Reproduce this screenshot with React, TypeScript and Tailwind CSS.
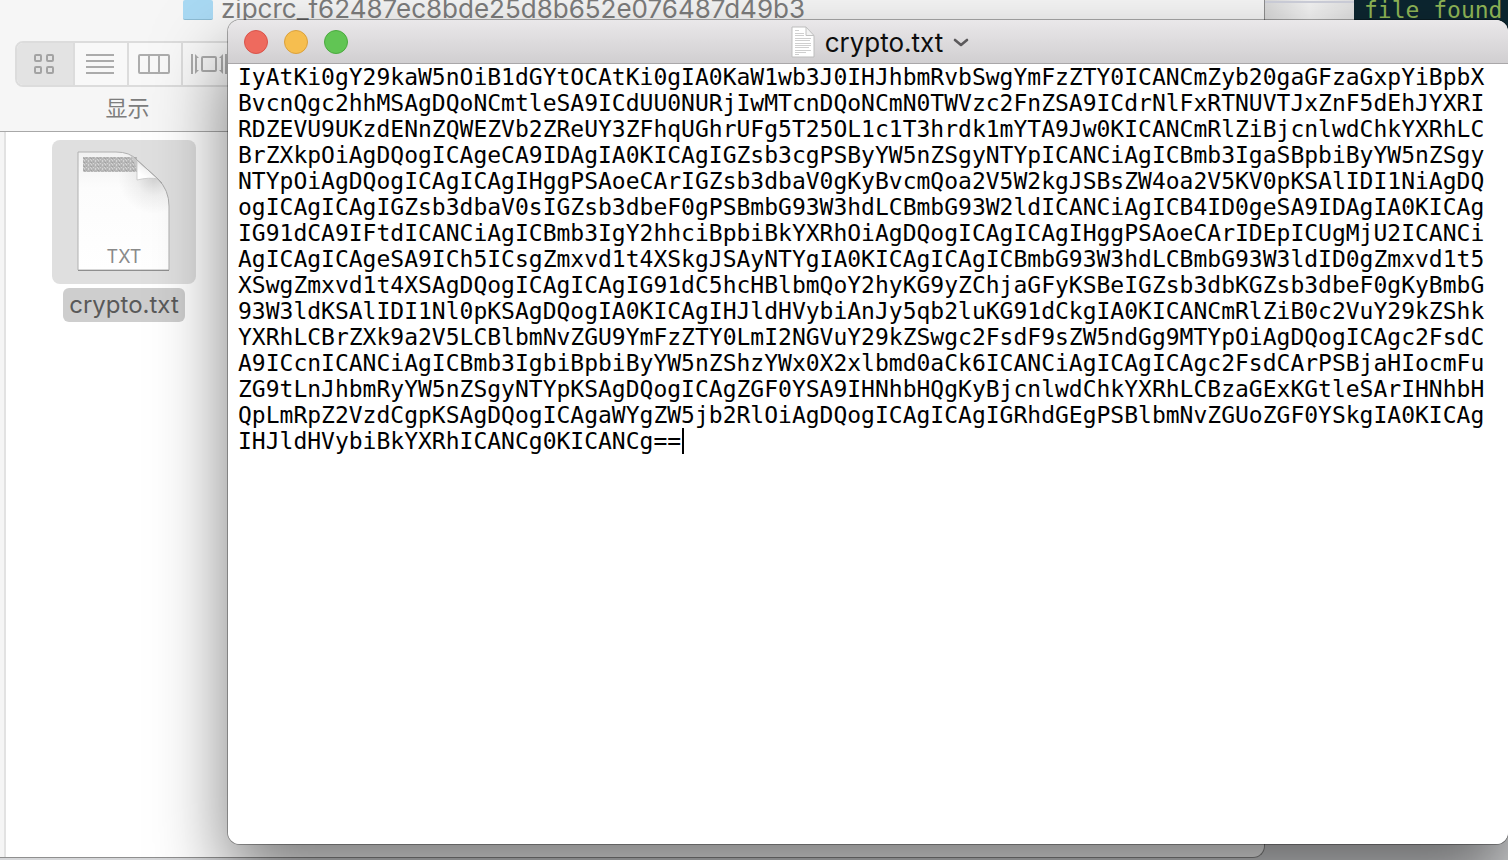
import React from 'react';

const LINES = [
  'IyAtKi0gY29kaW5nOiB1dGYtOCAtKi0gIA0KaW1wb3J0IHJhbmRvbSwgYmFzZTY0ICANCmZyb20gaGFzaGxpYiBpbX',
  'BvcnQgc2hhMSAgDQoNCmtleSA9ICdUU0NURjIwMTcnDQoNCmN0TWVzc2FnZSA9ICdrNlFxRTNUVTJxZnF5dEhJYXRI',
  'RDZEVU9UKzdENnZQWEZVb2ZReUY3ZFhqUGhrUFg5T25OL1c1T3hrdk1mYTA9Jw0KICANCmRlZiBjcnlwdChkYXRhLC',
  'BrZXkpOiAgDQogICAgeCA9IDAgIA0KICAgIGZsb3cgPSByYW5nZSgyNTYpICANCiAgICBmb3IgaSBpbiByYW5nZSgy',
  'NTYpOiAgDQogICAgICAgIHggPSAoeCArIGZsb3dbaV0gKyBvcmQoa2V5W2kgJSBsZW4oa2V5KV0pKSAlIDI1NiAgDQ',
  'ogICAgICAgIGZsb3dbaV0sIGZsb3dbeF0gPSBmbG93W3hdLCBmbG93W2ldICANCiAgICB4ID0geSA9IDAgIA0KICAg',
  'IG91dCA9IFtdICANCiAgICBmb3IgY2hhciBpbiBkYXRhOiAgDQogICAgICAgIHggPSAoeCArIDEpICUgMjU2ICANCi',
  'AgICAgICAgeSA9ICh5ICsgZmxvd1t4XSkgJSAyNTYgIA0KICAgICAgICBmbG93W3hdLCBmbG93W3ldID0gZmxvd1t5',
  'XSwgZmxvd1t4XSAgDQogICAgICAgIG91dC5hcHBlbmQoY2hyKG9yZChjaGFyKSBeIGZsb3dbKGZsb3dbeF0gKyBmbG',
  '93W3ldKSAlIDI1Nl0pKSAgDQogIA0KICAgIHJldHVybiAnJy5qb2luKG91dCkgIA0KICANCmRlZiB0c2VuY29kZShk',
  'YXRhLCBrZXk9a2V5LCBlbmNvZGU9YmFzZTY0LmI2NGVuY29kZSwgc2FsdF9sZW5ndGg9MTYpOiAgDQogICAgc2FsdC',
  'A9ICcnICANCiAgICBmb3IgbiBpbiByYW5nZShzYWx0X2xlbmd0aCk6ICANCiAgICAgICAgc2FsdCArPSBjaHIocmFu',
  'ZG9tLnJhbmRyYW5nZSgyNTYpKSAgDQogICAgZGF0YSA9IHNhbHQgKyBjcnlwdChkYXRhLCBzaGExKGtleSArIHNhbH',
  'QpLmRpZ2VzdCgpKSAgDQogICAgaWYgZW5jb2RlOiAgDQogICAgICAgIGRhdGEgPSBlbmNvZGUoZGF0YSkgIA0KICAg',
  'IHJldHVybiBkYXRhICANCg0KICANCg==',
];

function GridIcon() {
  return (
    <svg className="h-6 w-6" viewBox="0 0 24 24" fill="none" stroke="#a3a3a3" strokeWidth="2">
      <rect x="2" y="3" width="6" height="6" rx="1" />
      <rect x="14" y="3" width="6" height="6" rx="1" />
      <rect x="2" y="15" width="6" height="6" rx="1" />
      <rect x="14" y="15" width="6" height="6" rx="1" />
    </svg>
  );
}

function ListIcon() {
  return (
    <svg className="h-5 w-7" viewBox="0 0 28 20" stroke="#ababab" strokeWidth="2">
      <path d="M0 1H28M0 7H28M0 13H28M0 19H28" />
    </svg>
  );
}

function ColumnsIcon() {
  return (
    <svg className="h-5 w-8" viewBox="0 0 32 20" fill="none" stroke="#adadad" strokeWidth="2">
      <rect x="1" y="1" width="30" height="18" rx="1" />
      <path d="M11 1V19M21 1V19" />
    </svg>
  );
}

function CoverFlowIcon() {
  return (
    <svg className="h-5 w-9 shrink-0" viewBox="0 0 36 20" fill="none" stroke="#acacac" strokeWidth="2">
      <path d="M1 0V20M35 0V20" />
      <path d="M4 0L8 4H6V16H8L4 20Z M32 0L28 4H30V16H28L32 20Z" fill="#acacac" stroke="none" />
      <rect x="11" y="3" width="14" height="14" rx="1" />
    </svg>
  );
}

function FileIcon() {
  return (
    <svg className="h-32 w-28" viewBox="0 0 112 128" aria-hidden="true">
      <defs>
        <linearGradient id="curl" x1="0.45" y1="0.9" x2="0.75" y2="0.45">
          <stop offset="0" stopColor="#ffffff" />
          <stop offset="0.6" stopColor="#f4f4f4" />
          <stop offset="1" stopColor="#dcdcdc" />
        </linearGradient>
        <linearGradient id="sheet" x1="0" y1="0" x2="0" y2="1">
          <stop offset="0" stopColor="#f1f1f1" />
          <stop offset="0.3" stopColor="#fcfcfc" />
          <stop offset="1" stopColor="#ffffff" />
        </linearGradient>
        <radialGradient id="fold" cx="86" cy="30" r="36" gradientUnits="userSpaceOnUse">
          <stop offset="0" stopColor="#000" stopOpacity="0.16" />
          <stop offset="0.5" stopColor="#000" stopOpacity="0.05" />
          <stop offset="1" stopColor="#000" stopOpacity="0" />
        </radialGradient>
        <pattern id="print" width="7" height="4" patternUnits="userSpaceOnUse">
          <rect width="7" height="4" fill="#d4d4d4" />
          <path d="M0 1H2M3 1H6M1 2.2H3M4 2.2H5M0 3H1M2 3H4M5 3H7" stroke="#8c8c8c" strokeWidth="0.8" />
        </pattern>
      </defs>
      <path d="M10 4H48Q62 4 69 12L90 31Q101 42 101 58V122H10Z" fill="url(#sheet)" stroke="#b0b0b0" strokeWidth="1" />
      <path d="M48 4Q62 4 69 12L90 31Q101 42 101 58V80H48Z" fill="url(#fold)" />
      <rect x="15" y="9" width="54" height="15" fill="url(#print)" />
      <path d="M62 7L69 12V24Q67 14 62 7Z" fill="#c8c8c8" />
      <path d="M69 12V32Q81 29 90 31Z" fill="url(#curl)" stroke="#c4c4c4" strokeWidth="0.8" />
      <path d="M66 9L69 12L90 31L94 35" stroke="#a8a8a8" strokeWidth="1" fill="none" />
      <path d="M10 122.5H101" stroke="#8f8f8f" strokeWidth="1" />
      <text x="56" y="115" textAnchor="middle" fill="#8a8a8a" fontSize="18" fontFamily="Inter, sans-serif">TXT</text>
    </svg>
  );
}

function TitleDocIcon() {
  return (
    <svg className="h-8 w-6" viewBox="0 0 24 32" aria-hidden="true">
      <path d="M1 1H15L23 10V31H1Z" fill="#fff" stroke="#bdbdbd" strokeWidth="1" />
      <path d="M15 1V9.5H23Z" fill="#f3f3f3" stroke="#c2c2c2" strokeWidth="1" />
      <path
        d="M4 4.5H8M4 7.5H13M4 9.5H13M4 12.5H20M4 14.5H19M4 17.5H20M4 19.5H20M4 21.5H18M4 24.5H20M4 26.5H15M4 28.5H8"
        stroke="#cfcfcf"
        strokeWidth="1"
      />
    </svg>
  );
}

function FinderWindow() {
  return (
    <section className="absolute top-0 bottom-0.5 left-0 flex w-[1265px] flex-col overflow-hidden rounded-br-xl border-r border-b border-[#8f8f8f] bg-white">
      <header className="flex flex-col border-b border-[#a8a8a8] bg-[#f6f6f6] pb-[7px]">
        <div className="flex h-[23px] items-end gap-2 pl-[183px]">
          <span className="mb-[3px] h-5 w-[30px] rounded-xs border-b border-[#8dbbd3] bg-[#a9d9f3]" />
          <h2 className="text-[26px] leading-7 text-[#7d7d7d]">zipcrc_f62487ec8bde25d8b652e076487d49b3</h2>
        </div>
        <div className="mt-[18px] flex w-60 flex-col pl-[15px]">
          <div className="flex h-[46px] w-60 overflow-hidden rounded-l-lg border-2 border-[#dcdcdc] bg-[#f8f8f8]">
            <button aria-label="Icons" className="flex w-[58px] items-center justify-center border-r-2 border-[#dcdcdc] bg-[#e3e3e3]"><GridIcon /></button>
            <button aria-label="List" className="flex w-[54px] items-center justify-center border-r-2 border-[#dcdcdc] pr-0.5"><ListIcon /></button>
            <button aria-label="Columns" className="flex w-[54px] items-center justify-center border-r-2 border-[#dcdcdc] pr-0.5"><ColumnsIcon /></button>
            <button aria-label="Cover Flow" className="flex flex-1 items-center pl-2"><CoverFlowIcon /></button>
          </div>
          <span className="mt-[5px] self-center text-[22px] leading-8 text-[#7d7d7d]">显示</span>
        </div>
      </header>
      <div className="flex flex-1">
        <div className="w-1.5 border-r-2 border-[#e2e2e2] bg-[#f5f5f5]" />
        <figure className="flex w-[236px] flex-col items-center gap-1 self-start pt-2">
          <div className="flex h-36 w-36 items-center justify-center rounded-lg bg-[#dfdfdf]">
            <FileIcon />
          </div>
          <figcaption className="rounded-md bg-[#cecece] px-1.5 text-2xl leading-[34px] text-[#595959]">crypto.txt</figcaption>
        </figure>
      </div>
    </section>
  );
}

function EditorWindow() {
  return (
    <section className="absolute top-5 right-0 bottom-4 left-[228px] flex flex-col overflow-hidden rounded-xl bg-white shadow-[0_0_0_1px_#00000050,0_36px_72px_#00000085]">
      <header className="flex h-11 shrink-0 items-center border-b border-[#a9a7a9] bg-linear-to-b from-[#eae8ea] to-[#d1cfd1] px-4">
        <div className="flex flex-1 gap-4">
          <button aria-label="Close" className="h-6 w-6 rounded-full border border-[#d9534a] bg-[#ee6a5e]" />
          <button aria-label="Minimise" className="h-6 w-6 rounded-full border border-[#dba13c] bg-[#f6be4f]" />
          <button aria-label="Zoom" className="h-6 w-6 rounded-full border border-[#4baa3f] bg-[#61c554]" />
        </div>
        <h1 className="flex items-center gap-2.5 pl-6 text-[26px] leading-8 text-[#0d0d0d]">
          <TitleDocIcon />
          <span className="pt-0.5">crypto.txt</span>
          <svg className="h-4 w-4" viewBox="0 0 16 16" fill="none" stroke="#5c5a5c" strokeWidth="2.6" strokeLinecap="round" strokeLinejoin="round">
            <path d="M2 6L8 11L14 6" />
          </svg>
        </h1>
        <div className="flex-1" />
      </header>
      <div className="relative flex flex-1">
        <textarea
          aria-label="crypto.txt"
          spellCheck={false}
          defaultValue={LINES.join('\n')}
          className="w-full resize-none overflow-hidden bg-white pl-2.5 font-['DejaVu_Sans_Mono',monospace] text-[23px] leading-[26px] whitespace-pre text-black outline-none"
        />
        <span className="absolute top-[364px] left-[454px] h-[26px] w-0.5 bg-black" />
      </div>
    </section>
  );
}

export default function App() {
  return (
    <main className="relative h-screen overflow-hidden bg-[#d6d7d9] font-[Inter,'Noto_Sans_CJK_SC',sans-serif]">
      <section className="absolute top-0 right-0 left-[1265px] flex h-14">
        <div className="w-[89px] bg-linear-to-r from-[#dadada] via-[#f4f4f4] to-[#e2e2e2]">
          <div className="h-[3px] border-b-2 border-[#cfd1dc]" />
        </div>
        <pre className="flex-1 bg-[#0c2630] pl-2.5 font-['DejaVu_Sans_Mono',monospace] text-[23px] leading-5 text-[#8fb556]">file found</pre>
      </section>
      <FinderWindow />
      <EditorWindow />
    </main>
  );
}
